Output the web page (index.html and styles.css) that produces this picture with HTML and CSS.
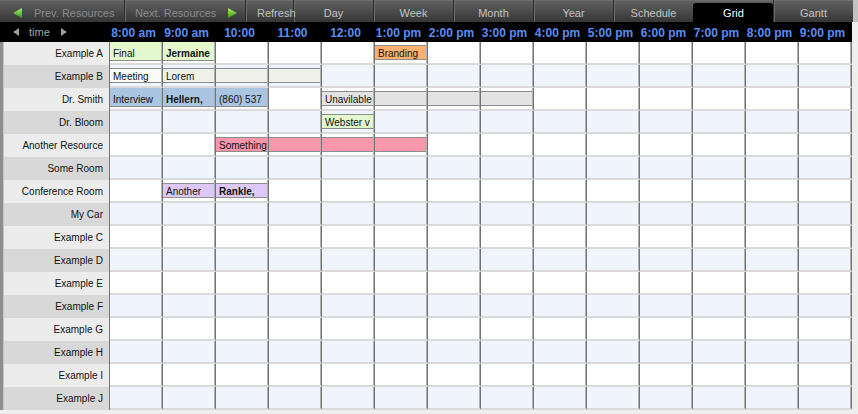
FILE: index.html
```html
<!DOCTYPE html>
<html>
<head>
<meta charset="utf-8">
<title>Grid</title>
<link rel="stylesheet" href="styles.css">
</head>
<body>
<div class="app">
  <div class="toolbar">
    <div class="tb tb-prev disabled">
      <svg class="garrow" width="9" height="10" viewBox="0 0 9 10"><defs><linearGradient id="gl" x1="0" y1="0" x2="0" y2="1"><stop offset="0" stop-color="#a8f06c"/><stop offset="1" stop-color="#3a9a12"/></linearGradient></defs><polygon points="9,0 9,10 0,5" fill="url(#gl)"/></svg>
      <span>Prev. Resources</span>
    </div>
    <div class="tb tb-next disabled">
      <span>Next. Resources</span>
      <svg class="garrow" width="9" height="10" viewBox="0 0 9 10"><defs><linearGradient id="gr" x1="0" y1="0" x2="0" y2="1"><stop offset="0" stop-color="#a8f06c"/><stop offset="1" stop-color="#3a9a12"/></linearGradient></defs><polygon points="0,0 0,10 9,5" fill="url(#gr)"/></svg>
    </div>
    <div class="tb tb-refresh">Refresh</div>
    <div class="tb view">Day</div>
    <div class="tb view">Week</div>
    <div class="tb view">Month</div>
    <div class="tb view">Year</div>
    <div class="tb view">Schedule</div>
    <div class="tb view active">Grid</div>
    <div class="tb view">Gantt</div>
  </div>

  <div class="timebar">
    <div class="time-nav">
      <svg width="6" height="8" viewBox="0 0 6 8"><polygon points="6,0 6,8 0,4" fill="#9c9c9c"/></svg>
      <span class="time-lbl">time</span>
      <svg width="6" height="8" viewBox="0 0 6 8"><polygon points="0,0 0,8 6,4" fill="#9c9c9c"/></svg>
    </div>
    <div class="hour">8:00 am</div>
    <div class="hour">9:00 am</div>
    <div class="hour">10:00</div>
    <div class="hour">11:00</div>
    <div class="hour">12:00</div>
    <div class="hour">1:00 pm</div>
    <div class="hour">2:00 pm</div>
    <div class="hour">3:00 pm</div>
    <div class="hour">4:00 pm</div>
    <div class="hour">5:00 pm</div>
    <div class="hour">6:00 pm</div>
    <div class="hour">7:00 pm</div>
    <div class="hour">8:00 pm</div>
    <div class="hour">9:00 pm</div>
  </div>

  <div class="grid">
    <div class="row">
      <div class="lbl">Example A</div>
      <div class="c"><div class="ev t green">Final</div></div>
      <div class="c"><div class="ev t green b">Jermaine</div></div>
      <div class="c"></div><div class="c"></div><div class="c"></div>
      <div class="c"><div class="ev s orange">Branding</div></div>
      <div class="c"></div><div class="c"></div><div class="c"></div><div class="c"></div>
      <div class="c"></div><div class="c"></div><div class="c"></div><div class="c"></div>
    </div>
    <div class="row alt">
      <div class="lbl">Example B</div>
      <div class="c"><div class="ev s white">Meeting</div></div>
      <div class="c"><div class="ev s beige">Lorem</div></div>
      <div class="c"><div class="ev s beige"></div></div>
      <div class="c"><div class="ev s beige"></div></div>
      <div class="c"></div><div class="c"></div><div class="c"></div><div class="c"></div><div class="c"></div>
      <div class="c"></div><div class="c"></div><div class="c"></div><div class="c"></div><div class="c"></div>
    </div>
    <div class="row">
      <div class="lbl">Dr. Smith</div>
      <div class="c"><div class="ev t blue">Interview</div></div>
      <div class="c"><div class="ev t blue b">Hellern,</div></div>
      <div class="c"><div class="ev t blue">(860) 537</div></div>
      <div class="c"></div>
      <div class="c"><div class="ev s gray">Unavilable</div></div>
      <div class="c"><div class="ev s gray"></div></div>
      <div class="c"><div class="ev s gray"></div></div>
      <div class="c"><div class="ev s gray"></div></div>
      <div class="c"></div><div class="c"></div><div class="c"></div><div class="c"></div><div class="c"></div><div class="c"></div>
    </div>
    <div class="row alt">
      <div class="lbl">Dr. Bloom</div>
      <div class="c"></div><div class="c"></div><div class="c"></div><div class="c"></div>
      <div class="c"><div class="ev s green">Webster v</div></div>
      <div class="c"></div><div class="c"></div><div class="c"></div><div class="c"></div><div class="c"></div>
      <div class="c"></div><div class="c"></div><div class="c"></div><div class="c"></div>
    </div>
    <div class="row">
      <div class="lbl">Another Resource</div>
      <div class="c"></div><div class="c"></div>
      <div class="c"><div class="ev s pink">Something</div></div>
      <div class="c"><div class="ev s pink"></div></div>
      <div class="c"><div class="ev s pink"></div></div>
      <div class="c"><div class="ev s pink"></div></div>
      <div class="c"></div><div class="c"></div><div class="c"></div><div class="c"></div>
      <div class="c"></div><div class="c"></div><div class="c"></div><div class="c"></div>
    </div>
    <div class="row alt">
      <div class="lbl">Some Room</div>
      <div class="c"></div><div class="c"></div><div class="c"></div><div class="c"></div><div class="c"></div><div class="c"></div><div class="c"></div>
      <div class="c"></div><div class="c"></div><div class="c"></div><div class="c"></div><div class="c"></div><div class="c"></div><div class="c"></div>
    </div>
    <div class="row">
      <div class="lbl">Conference Room</div>
      <div class="c"></div>
      <div class="c"><div class="ev s purple">Another</div></div>
      <div class="c"><div class="ev s purple b">Rankle,</div></div>
      <div class="c"></div><div class="c"></div><div class="c"></div><div class="c"></div>
      <div class="c"></div><div class="c"></div><div class="c"></div><div class="c"></div><div class="c"></div><div class="c"></div><div class="c"></div>
    </div>
    <div class="row alt">
      <div class="lbl">My Car</div>
      <div class="c"></div><div class="c"></div><div class="c"></div><div class="c"></div><div class="c"></div><div class="c"></div><div class="c"></div>
      <div class="c"></div><div class="c"></div><div class="c"></div><div class="c"></div><div class="c"></div><div class="c"></div><div class="c"></div>
    </div>
    <div class="row">
      <div class="lbl">Example C</div>
      <div class="c"></div><div class="c"></div><div class="c"></div><div class="c"></div><div class="c"></div><div class="c"></div><div class="c"></div>
      <div class="c"></div><div class="c"></div><div class="c"></div><div class="c"></div><div class="c"></div><div class="c"></div><div class="c"></div>
    </div>
    <div class="row alt">
      <div class="lbl">Example D</div>
      <div class="c"></div><div class="c"></div><div class="c"></div><div class="c"></div><div class="c"></div><div class="c"></div><div class="c"></div>
      <div class="c"></div><div class="c"></div><div class="c"></div><div class="c"></div><div class="c"></div><div class="c"></div><div class="c"></div>
    </div>
    <div class="row">
      <div class="lbl">Example E</div>
      <div class="c"></div><div class="c"></div><div class="c"></div><div class="c"></div><div class="c"></div><div class="c"></div><div class="c"></div>
      <div class="c"></div><div class="c"></div><div class="c"></div><div class="c"></div><div class="c"></div><div class="c"></div><div class="c"></div>
    </div>
    <div class="row alt">
      <div class="lbl">Example F</div>
      <div class="c"></div><div class="c"></div><div class="c"></div><div class="c"></div><div class="c"></div><div class="c"></div><div class="c"></div>
      <div class="c"></div><div class="c"></div><div class="c"></div><div class="c"></div><div class="c"></div><div class="c"></div><div class="c"></div>
    </div>
    <div class="row">
      <div class="lbl">Example G</div>
      <div class="c"></div><div class="c"></div><div class="c"></div><div class="c"></div><div class="c"></div><div class="c"></div><div class="c"></div>
      <div class="c"></div><div class="c"></div><div class="c"></div><div class="c"></div><div class="c"></div><div class="c"></div><div class="c"></div>
    </div>
    <div class="row alt">
      <div class="lbl">Example H</div>
      <div class="c"></div><div class="c"></div><div class="c"></div><div class="c"></div><div class="c"></div><div class="c"></div><div class="c"></div>
      <div class="c"></div><div class="c"></div><div class="c"></div><div class="c"></div><div class="c"></div><div class="c"></div><div class="c"></div>
    </div>
    <div class="row">
      <div class="lbl">Example I</div>
      <div class="c"></div><div class="c"></div><div class="c"></div><div class="c"></div><div class="c"></div><div class="c"></div><div class="c"></div>
      <div class="c"></div><div class="c"></div><div class="c"></div><div class="c"></div><div class="c"></div><div class="c"></div><div class="c"></div>
    </div>
    <div class="row alt">
      <div class="lbl">Example J</div>
      <div class="c"></div><div class="c"></div><div class="c"></div><div class="c"></div><div class="c"></div><div class="c"></div><div class="c"></div>
      <div class="c"></div><div class="c"></div><div class="c"></div><div class="c"></div><div class="c"></div><div class="c"></div><div class="c"></div>
    </div>
  </div>
</div>
</body>
</html>
```

FILE: styles.css
```css
* { box-sizing: border-box; }

html, body { margin: 0; padding: 0; }

body {
  width: 858px;
  height: 414px;
  overflow: hidden;
  background: linear-gradient(#c2c2c2 0, #c2c2c2 22px, #eeeeee 22px);
  font-family: "Liberation Sans", Arial, sans-serif;
  color: #111;
}

.app { width: 853px; }

/* ---------- toolbar ---------- */
.toolbar {
  display: flex;
  height: 22px;
  background: linear-gradient(#7a7a7a 0, #606060 1px, #4c4c4c 50%, #363636 100%);
}

.tb {
  display: flex;
  align-items: flex-start;
  height: 22px;
  padding-top: 4px;
  line-height: 18px;
  font-size: 11px;
  color: #c2c2c2;
  white-space: nowrap;
  border-left: 1px solid #2b2b2b;
  box-shadow: inset 1px 0 0 #6c6c6c;
}

.tb.disabled { color: #8a8a8a; }

.garrow { margin-top: 4px; flex: none; }

.tb-prev {
  width: 124px;
  padding-left: 13px;
  border-left: none;
  box-shadow: none;
}
.tb-prev span { margin-left: 12px; }

.tb-next {
  width: 121px;
  padding-left: 10px;
}
.tb-next span { margin-right: 12px; }

.tb-refresh {
  position: relative;
  z-index: 1;
  width: 48px;
  padding-left: 11px;
}

.view {
  width: 80px;
  justify-content: center;
}

.view.active {
  margin-top: 3px;
  height: 19px;
  padding-top: 1px;
  background: #000;
  color: #fff;
  border-radius: 3px 3px 0 0;
  border-left-color: #000;
  box-shadow: none;
}

/* ---------- time header ---------- */
.timebar {
  display: flex;
  width: 852px;
  height: 20px;
  background: #000;
}

.time-nav {
  display: flex;
  align-items: center;
  width: 107px;
  padding-left: 13px;
  font-size: 11px;
  color: #a6a6a6;
}

.time-lbl { margin: 0 11px 0 10px; line-height: 20px; }

.hour {
  width: 53px;
  padding-top: 1px;
  text-align: center;
  white-space: nowrap;
  font-size: 12px;
  font-weight: bold;
  line-height: 20px;
  color: #5a8cf2;
}

/* ---------- grid ---------- */
.grid {
  display: grid;
  grid-template-columns: 107px repeat(14, 53px);
  grid-auto-rows: 23px;
  width: 852px;
  border-left: 3px solid #8e8e8e;
}

.row { display: contents; }

.lbl {
  font-size: 10px;
  padding-top: 1px;
  line-height: 22px;
  text-align: right;
  padding-right: 6px;
  white-space: nowrap;
  background: #ececec;
  border-right: 1px solid #747474;
  box-shadow: inset 1px 0 0 #c4c4c4;
}
.row.alt .lbl { background: #d8d8d8; }

.c {
  background: #fff;
  border-right: 1px solid #747474;
  border-bottom: 2px solid #dadada;
  box-shadow: inset -1px 0 0 #b0b0b0;
  overflow: hidden;
}
.row.alt .c { background: #f0f4fd; }

/* ---------- events ---------- */
.ev {
  margin-right: 1px;
  font-size: 10px;
  white-space: nowrap;
  overflow: hidden;
  padding-left: 3px;
  color: #111;
}

.ev.s {
  margin-top: 3px;
  height: 15px;
  line-height: 15px;
  border-top: 1px solid #8c8c8c;
  border-bottom: 1px solid #8c8c8c;
}

.ev.t {
  height: 19px;
  padding-top: 4px;
  line-height: 15px;
  border-bottom: 1px solid #8c8c8c;
}

.ev.b { font-weight: bold; }

.green  { background: #e3f8cd; }
.orange { background: #f9b170; }
.white  { background: #fafaf8; }
.beige  { background: #f1f1ec; }
.blue   { background: #a9c5e2; }
.gray   { background: #e3e3e3; }
.pink   { background: #fb97ad; }
.purple { background: #dcc9f6; }
```
